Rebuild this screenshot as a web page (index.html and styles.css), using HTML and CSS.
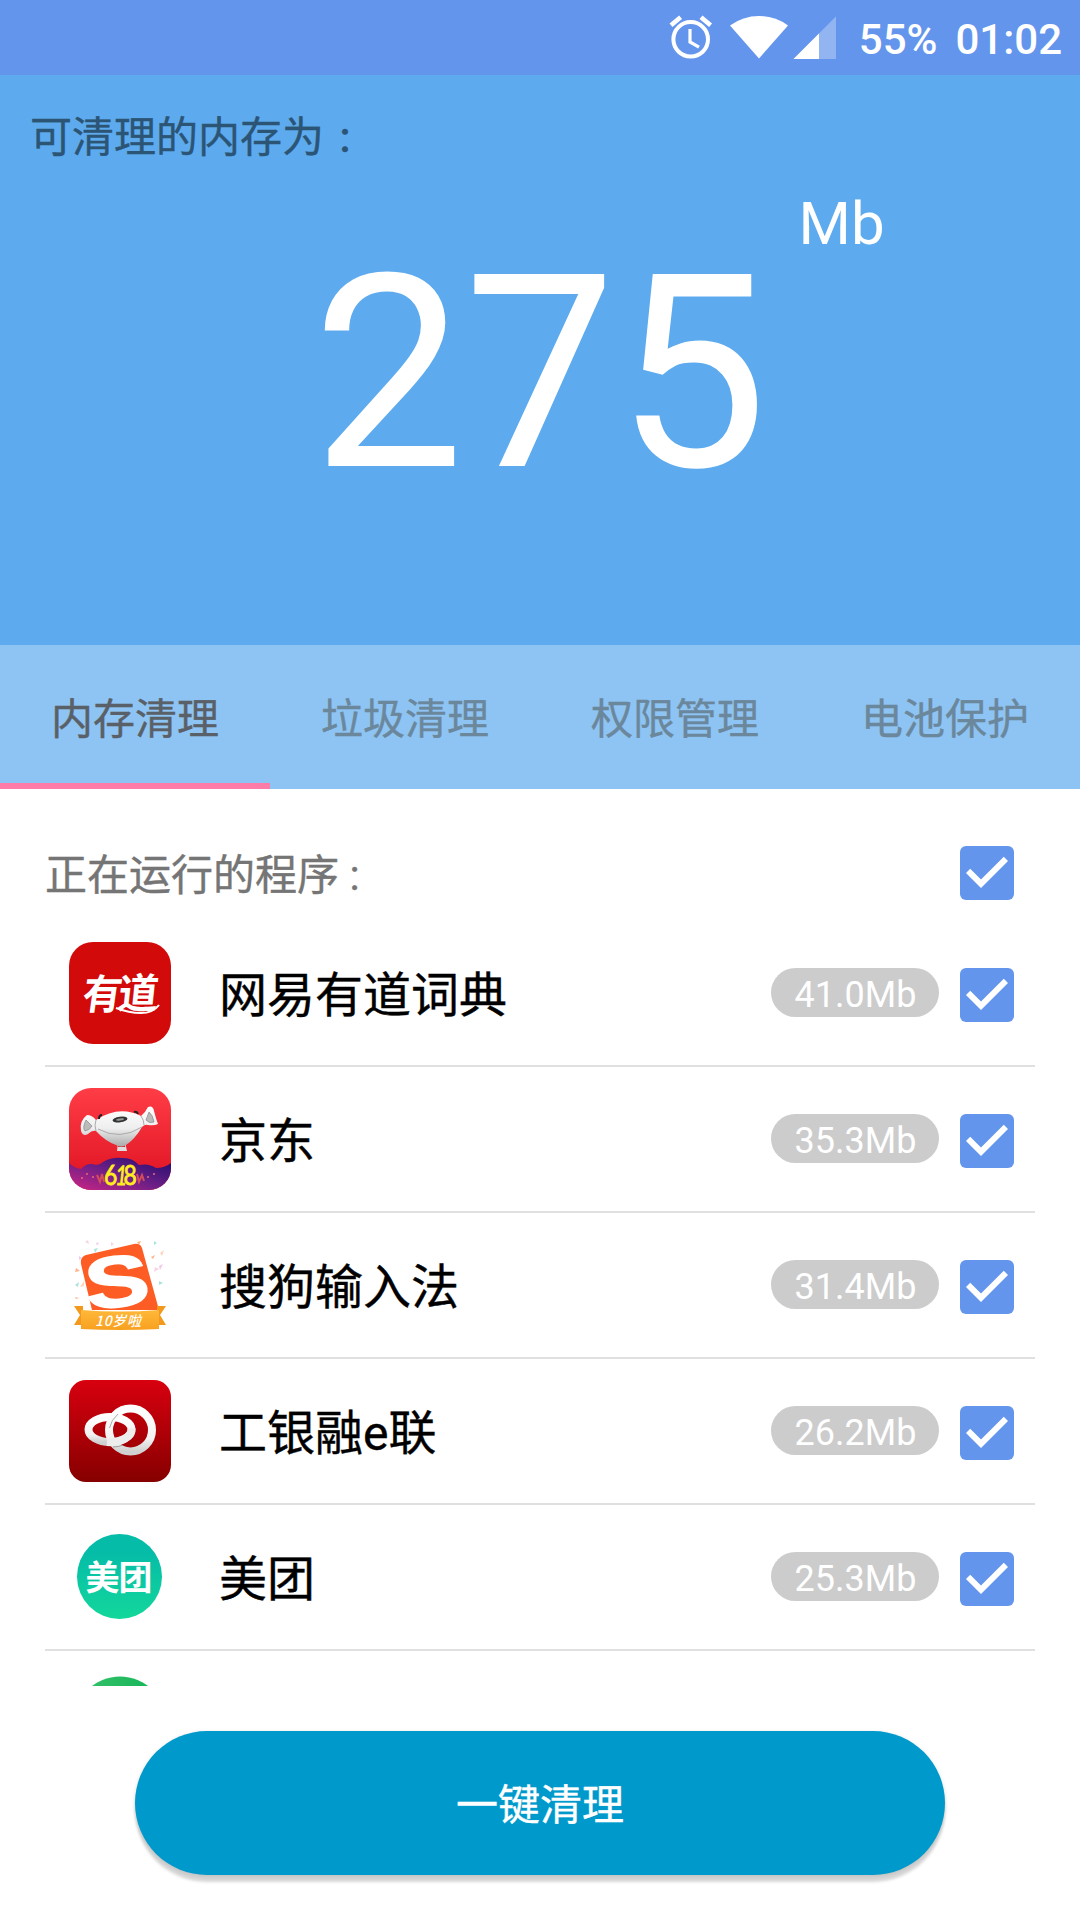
FILE: index.html
```html
<!DOCTYPE html>
<html lang="zh-CN">
<head>
<meta charset="utf-8">
<title>内存清理</title>
<link rel="stylesheet" href="styles.css">
</head>
<body>
<svg class="defs" width="0" height="0" aria-hidden="true">
  <symbol id="check" viewBox="3 3 18 18">
    <rect x="3" y="3" width="18" height="18" rx="2" fill="#6495ed"/>
    <path d="M10 17l-5-5 1.41-1.41L10 14.17l7.59-7.59L19 8z" fill="#fff"/>
  </symbol>
</svg>
<div class="screen">
  <header class="status">
    <svg class="status-icons" width="150" height="75" viewBox="688 0 150 75" overflow="visible">
      <g fill="none" stroke="#fff">
        <circle cx="690.7" cy="39.3" r="17.3" stroke-width="4"/>
        <path d="M690 29v13l9 5.2" stroke-width="3.2"/>
        <path d="M671 25.2l9.6-8M710.6 25.2l-9.6-8" stroke-width="4.6"/>
      </g>
      <path d="M759 58.500L730 25.500Q743 16 759 16T788 25.500z" fill="#fff"/>
      <path d="M793.500 59L836 16.500V59z" fill="#fff" opacity=".3"/>
      <path d="M793.500 59L819 33.500V59z" fill="#fff"/>
    </svg>
    <span class="battery">55%</span>
    <span class="clock">01:02</span>
  </header>

  <section class="hero">
    <p class="hero-label">可清理的内存为<span class="colon">:</span></p>
    <div class="amount">
      <span class="number">275</span>
      <span class="unit">Mb</span>
    </div>
  </section>

  <nav class="tabs">
    <a class="tab active">内存清理</a>
    <a class="tab">垃圾清理</a>
    <a class="tab">权限管理</a>
    <a class="tab">电池保护</a>
  </nav>

  <main class="list-area">
    <div class="list-head">
      <span class="list-title">正在运行的程序 :</span>
      <svg class="check"><use href="#check"/></svg>
    </div>
    <ul class="apps">
      <li class="app">
        <svg class="icon" viewBox="0 0 102 102">
          <rect width="102" height="102" rx="24" fill="#d20a0a"/>
          <g class="logo-text" fill="#fff">
            <text transform="translate(12 67) skewX(-8)" font-size="41" textLength="39" lengthAdjust="spacingAndGlyphs">有</text>
            <text transform="translate(48 66) skewX(-6)" font-size="41" textLength="40" lengthAdjust="spacingAndGlyphs">道</text>
          </g>
          <path d="M47 66Q60 71 72 71Q84 71 90 63" fill="none" stroke="#fff" stroke-width="2"/>
        </svg>
        <span class="name">网易有道词典</span><span class="size">41.0Mb</span>
        <svg class="check"><use href="#check"/></svg>
      </li>
      <li class="app">
        <svg class="icon" viewBox="0 0 102 102">
          <defs>
            <linearGradient id="jdRed" x2="0" y2="1"><stop stop-color="#ff3d46"/><stop offset="1" stop-color="#dd1020"/></linearGradient>
            <linearGradient id="jdNight" x1="0" y1="1" x2="1" y2="0"><stop stop-color="#cf2585"/><stop offset=".5" stop-color="#6a1f86"/><stop offset="1" stop-color="#1f0b6d"/></linearGradient>
            <linearGradient id="jdDog" x2="0" y2="1"><stop stop-color="#fff"/><stop offset=".55" stop-color="#eee"/><stop offset="1" stop-color="#aaa"/></linearGradient>
            <clipPath id="jdClip"><rect width="102" height="102" rx="22"/></clipPath>
          </defs>
          <g clip-path="url(#jdClip)">
            <rect width="102" height="102" fill="url(#jdRed)"/>
            <path d="M0 75Q5 80 12 81Q18 74 27 77Q31 77 34 74Q43 69 52 70Q63 69 70 77Q80 75 87 80Q96 80 102 75V102H0z" fill="url(#jdNight)"/>
            <path d="M28 87l3 7 2-8 2 8M68 86l2 8 3-7 2 6" stroke="#d34d5b" stroke-width="2" fill="none"/>
            <path d="M17 86h2M23 89h2M78 89h2M84 86h2M12 90h2" stroke="#e86a78" stroke-width="1.500"/>
            <path d="M49 54h7l2 9H48z" fill="#ddd"/><path d="M49 56h7v3h-7z" fill="#e01c2c"/>
            <path d="M18 27Q23 27 27 32Q50 17 72 28Q76 25 79 19Q84 17 85 23Q87 31 89 36Q85 38 79 37Q76 36 73 39Q66 51 57 57Q52 60 47 57Q36 53 27 43Q23 42 19 46Q14 49 12 43Q10 33 18 27z" fill="url(#jdDog)"/>
            <path d="M27 32q-2 5 0 11M72 28q3 4 3 9M29 41q22 12 44-2" stroke="#aaa" fill="none"/>
            <path d="M17 32q-4 8-1 11 5-1 7-5zM80 24q4 3 5 10-5 2-8-2z" fill="#bbb" stroke="#888" stroke-width=".7"/>
            <ellipse cx="51" cy="31.500" rx="7.500" ry="2.800" transform="rotate(-8 51 31.500)" fill="#333"/>
            <ellipse cx="51" cy="31.500" rx="4" ry="1" transform="rotate(-8 51 31.500)" fill="#999"/>
            <path d="M30 31q0-4 3-4M65 24q3-1 4 2" stroke="#222" stroke-width="2" fill="none"/>
            <g class="festival" fill="#ffed1e" stroke="#ffed1e" stroke-width=".8"><text transform="translate(35 97) scale(.85 1)">6</text><text transform="translate(46 97) skewX(-6) scale(.7 1)">1</text><text transform="translate(54.500 97) scale(.85 1)">8</text></g>
          </g>
        </svg>
        <span class="name">京东</span><span class="size">35.3Mb</span>
        <svg class="check"><use href="#check"/></svg>
      </li>
      <li class="app">
        <svg class="icon" viewBox="0 0 102 102">
          <defs><linearGradient id="ribbon" x2="0" y2="1"><stop stop-color="#ffb83a"/><stop offset="1" stop-color="#f8a01f"/></linearGradient></defs>
          <g opacity=".75">
            <g fill="#f7c7d8"><path d="M16 8l3-2 1 4zM86 33l4 2-5 3zM42 8l3 2-3 2zM75 89l3-2v4z"/><path d="M15 47l-4 6 4-1zM91 19l4-3-2 6z" fill="#ffc7a8"/></g>
            <g fill="#8fdcd2"><path d="M25 15l4-1-3 5zM90 47l4 2-4 2zM6 51l4-3-1 5zM85 7l3 2-3 2z"/></g>
            <g fill="#ff9a66"><path d="M7 34l4 3-5 1zM68 8l4-1-2 4zM82 23l4-2-2 4zM6 63l4 1-3 1z"/></g>
            <g fill="#eeb6e4"><path d="M28 8l2 2-3 1zM94 30l-3 6-1-4zM10 22l3 2-3 2z"/></g>
          </g>
          <path d="M17 21L65 10Q71 9 73 14L90 76H23L12 30Q11 23 17 21z" fill="#fd5d24"/>
          <text class="logo-s" transform="translate(20.500 77) rotate(-7) scale(1.380 1.030)" fill="#fff" stroke="#fff" stroke-width="1.500" x="-1" y="-1">S</text>
          <path d="M5 72H14V86H22V91H5L11 81zM97 72H88V86H80V91H97L91 81z" fill="#f3991d"/>
          <path d="M12 76Q51 79 90 76V95Q51 97 12 95z" fill="url(#ribbon)"/>
          <text class="ribbon-text" x="26" y="91.500" fill="#fff" textLength="46">10岁啦</text>
        </svg>
        <span class="name">搜狗输入法</span><span class="size">31.4Mb</span>
        <svg class="check"><use href="#check"/></svg>
      </li>
      <li class="app">
        <svg class="icon" viewBox="0 0 102 102">
          <defs>
            <linearGradient id="bankRed" x2="0" y2="1"><stop stop-color="#d8000f"/><stop offset="1" stop-color="#860000"/></linearGradient>
            <linearGradient id="ring" x2="0" y2="1"><stop stop-color="#fff"/><stop offset=".7" stop-color="#f2f2f2"/><stop offset="1" stop-color="#d0d0d0"/></linearGradient>
          </defs>
          <rect width="102" height="102" rx="17" fill="url(#bankRed)"/>
          <g fill="none" stroke="url(#ring)" stroke-width="8">
            <ellipse cx="41" cy="49.500" rx="21.500" ry="12.600"/>
            <ellipse cx="61.500" cy="50" rx="21.500" ry="21.500"/>
            <path d="M62.500 48.500A21.500 12.600 0 0 1 38 62" stroke="#ededed"/>
          </g>
          <path d="M44 67q6 0 10-2M49 34q-7 6-8.500 14" stroke="#777" stroke-width="1" fill="none" opacity=".6"/>
        </svg>
        <span class="name">工银融e联</span><span class="size">26.2Mb</span>
        <svg class="check"><use href="#check"/></svg>
      </li>
      <li class="app">
        <svg class="icon" viewBox="0 0 102 102">
          <defs><linearGradient id="mt" x2="0" y2="1"><stop offset=".2" stop-color="#05bca8"/><stop offset="1" stop-color="#13d79b"/></linearGradient></defs>
          <circle cx="50.500" cy="50.500" r="42.500" fill="url(#mt)"/>
          <text class="logo-text" x="16.500" y="64" font-size="34" fill="#fff" textLength="67">美团</text>
        </svg>
        <span class="name">美团</span><span class="size">25.3Mb</span>
        <svg class="check"><use href="#check"/></svg>
      </li>
      <li class="app">
        <svg class="icon" viewBox="0 0 102 102">
          <defs><linearGradient id="green" x2="1" y2=".3"><stop stop-color="#3ac36c"/><stop offset="1" stop-color="#0eb255"/></linearGradient></defs>
          <circle cx="51" cy="50.500" r="46" fill="url(#green)"/>
        </svg>
      </li>
    </ul>
  </main>

  <footer class="footer">
    <button class="clean">一键清理</button>
  </footer>
</div>
</body>
</html>
```
FILE: styles.css
```css
* { box-sizing: border-box; }
body {
  margin: 0;
  background: #fff;
  font-family: Roboto, "Noto Sans CJK SC", sans-serif;
}
.defs { display: block; }
.screen {
  display: flex;
  flex-direction: column;
  width: 1080px;
  height: 1920px;
  overflow: hidden;
}
.status {
  display: flex;
  justify-content: flex-end;
  align-items: center;
  height: 75px;
  padding-right: 18px;
  background: #6495ed;
  color: #fff;
  font-size: 42px;
  font-weight: 500;
  line-height: 75px;
}
.battery { margin-left: 21px; padding-top: 4px; }
.clock { margin-left: 18px; padding-top: 4px; }

.hero {
  height: 570px;
  padding: 33px 30px 0;
  background: #5dabee;
}
.hero-label {
  margin: 0;
  height: 57px;
  color: #2b5475;
  font-size: 42px;
  line-height: 60px;
}
.colon { display: inline-block; width: 42px; text-align: center; font-weight: 500; }
.amount {
  display: grid;
  grid-template-columns: 1fr auto 1fr;
  color: #fff;
}
.number {
  grid-column: 2;
  margin-top: 51px;
  font-size: 270px;
  line-height: 316px;
}
.unit {
  margin: 24px 0 0 31px;
  font-size: 60px;
  line-height: 70px;
}

.tabs {
  display: grid;
  grid-template-columns: repeat(4, 1fr);
  height: 144px;
  background: #8ec4f3;
}
.tab {
  height: 144px;
  padding-top: 3px;
  color: #6b879c;
  font-size: 42px;
  line-height: 144px;
  text-align: center;
}
.tab.active {
  color: #5a6067;
  box-shadow: inset 0 -6px #ff7ba8;
}
.hero-label, .tab, .list-title, .name, .clean { -webkit-text-stroke: .4px currentColor; }

.list-area {
  height: 897px;
  padding: 0 45px;
  overflow: hidden;
}
.list-head {
  display: flex;
  justify-content: space-between;
  height: 132px;
  padding: 57px 21px 0 0;
}
.list-title {
  color: #757575;
  font-size: 42px;
  line-height: 60px;
}
.check { width: 54px; height: 54px; flex: none; }
.apps { margin: 0; padding: 0; list-style: none; }
.app {
  display: flex;
  align-items: center;
  height: 146px;
  padding: 0 21px 0 24px;
  border-bottom: 2px solid #e0e0e0;
}
.icon { width: 102px; height: 102px; flex: none; }
.name {
  flex: 1;
  margin-left: 48px;
  padding-top: 5px;
  color: #000;
  font-size: 48px;
  line-height: 60px;
}
.size {
  width: 168px;
  height: 49px;
  margin-bottom: 2px;
  padding: 3px 0 0 1px;
  border-radius: 25px;
  background: #ccc;
  color: #fff;
  font-size: 36px;
  line-height: 48px;
  text-align: center;
}
.app .check { margin: 4px 0 0 21px; }

.logo-text { font-family: "Noto Sans CJK SC", sans-serif; font-weight: 700; }
.logo-s { font: 700 70px "Liberation Sans", sans-serif; }
.festival { font: 400 27px Lato, sans-serif; }
.ribbon-text { font: italic 500 14px "Noto Sans CJK SC", sans-serif; }

.footer { padding: 45px 135px 0; }
.clean {
  display: block;
  width: 810px;
  height: 144px;
  padding: 6px 0 0;
  border: 0;
  border-radius: 72px;
  background: #0099cc;
  color: #fff;
  font: 400 42px/138px Roboto, "Noto Sans CJK SC", sans-serif;
  box-shadow: 0 7px 3px rgba(0, 0, 0, .16), 0 1px 4px rgba(0, 0, 0, .12);
}
```
